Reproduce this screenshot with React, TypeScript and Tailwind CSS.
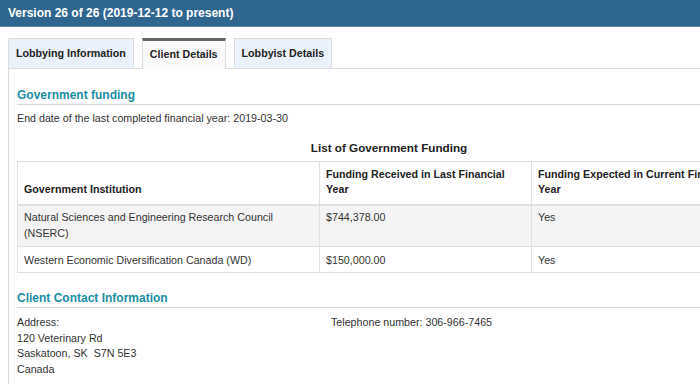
import React from "react";

const font = { fontFamily: '"Liberation Sans", Arial, sans-serif' };

const th = "border border-[#e0e0e0] border-b-2 text-left align-bottom px-[6px] pb-[7px] leading-[15px] font-bold text-[#222]";
const td1 = "border border-[#e0e0e0] align-top px-[6px] pt-[3px] leading-[16px]";
const td2 = "border border-[#e0e0e0] align-top px-[6px] pt-[5px] leading-[16px]";

export default function App() {
  return (
    <div className="w-[700px] h-[384px] overflow-hidden bg-white text-[10.7px] text-[#333]" style={font}>
      <div className="h-[27px] bg-[#2f6690] border-b border-[#5d8bad] px-[8px] flex items-center">
        <span className="text-white font-bold text-[12px] leading-none">Version 26 of 26 (2019-12-12 to present)</span>
      </div>
      <div className="pl-[8px] pt-[11px] w-[800px]">
        <div className="flex gap-[8px] h-[30px] items-end">
          <div className="h-[30px] px-[7px] pb-[1px] flex items-center bg-[#ebf1fa] border border-b-0 border-[#dcdcdc] font-bold text-[#222]">Lobbying Information</div>
          <div className="h-[31px] -mb-px relative z-10 px-[7px] pb-[1px] flex items-center bg-[#fbfbfb] border-x border-[#dcdcdc] border-t-[3px] border-t-[#666] font-bold text-[#222]">Client Details</div>
          <div className="h-[30px] px-[7px] pb-[1px] flex items-center bg-[#ebf1fa] border border-b-0 border-[#dcdcdc] font-bold text-[#222]">Lobbyist Details</div>
        </div>
        <div className="border-t border-l border-[#dcdcdc] pl-[8px] pt-[19px] pb-[20px]">
          <h2 className="text-[12px] font-bold text-[#1a8ea4] border-b border-[#d8d8d8] pb-[1px] leading-[15px]">Government funding</h2>
          <p className="mt-[6px] leading-[14px]">End date of the last completed financial year: 2019-03-30</p>
          <table className="mt-[15px] w-[744px] border-collapse table-fixed">
            <caption className="font-bold text-[11.7px] text-[#222] pb-[6px] leading-[15px]">List of Government Funding</caption>
            <colgroup>
              <col className="w-[302px]" />
              <col className="w-[212px]" />
              <col />
            </colgroup>
            <thead>
              <tr className="h-[43px]">
                <th className={th}>Government Institution</th>
                <th className={th}>Funding Received in Last Financial Year</th>
                <th className={th}>Funding Expected in Current Financial Year</th>
              </tr>
            </thead>
            <tbody>
              <tr className="bg-[#f4f4f4] h-[42px]">
                <td className={td1}>Natural Sciences and Engineering Research Council (NSERC)</td>
                <td className={td1}>$744,378.00</td>
                <td className={td1}>Yes</td>
              </tr>
              <tr className="h-[26px]">
                <td className={td2}>Western Economic Diversification Canada (WD)</td>
                <td className={td2}>$150,000.00</td>
                <td className={td2}>Yes</td>
              </tr>
            </tbody>
          </table>
          <h2 className="mt-[18px] text-[12px] font-bold text-[#1a8ea4] border-b border-[#d8d8d8] pb-[1px] leading-[15px]">Client Contact Information</h2>
          <div className="mt-[7px] flex leading-[15.5px]">
            <div className="w-[314px]">
              <div>Address:</div>
              <div>120 Veterinary Rd</div>
              <div>Saskatoon, SK&nbsp; S7N 5E3</div>
              <div>Canada</div>
            </div>
            <div>Telephone number: 306-966-7465</div>
          </div>
        </div>
      </div>
    </div>
  );
}
